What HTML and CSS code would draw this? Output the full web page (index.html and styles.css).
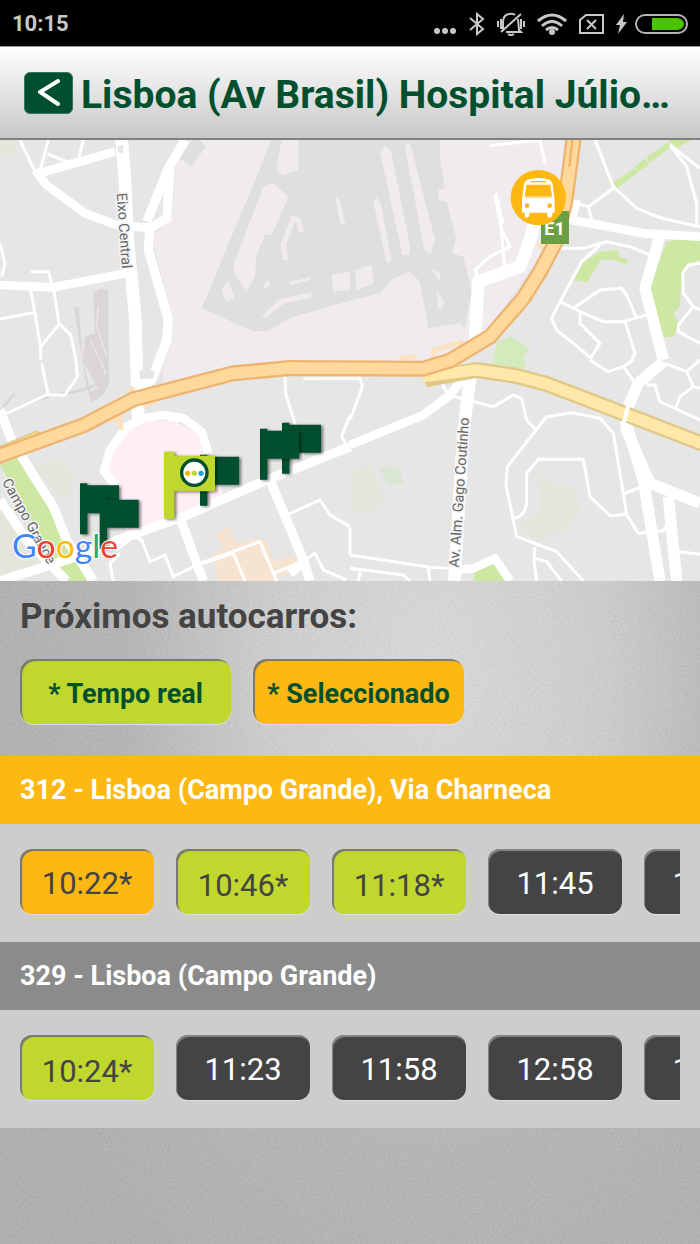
FILE: index.html
```html
<!DOCTYPE html>
<html lang="pt">
<head>
    <meta charset="UTF-8">
    <meta name="viewport" content="width=device-width, initial-scale=1.0">
    <title>Próximos autocarros</title>
    <link rel="stylesheet" href="styles.css">
</head>
<body>
    <div class="status-bar">
        <span class="clock">10:15</span>
        <div class="status-icons">
            <svg class="icon-dots" width="24" height="28" viewBox="0 0 24 28"><g fill="#c8c8c8"><circle cx="4" cy="21" r="3"/><circle cx="12" cy="21" r="3"/><circle cx="20" cy="21" r="3"/></g></svg>
            <svg class="icon-bluetooth" width="16" height="28" viewBox="0 0 16 28"><path d="M1 8l13 11-6 5V4l6 5L1 20" fill="none" stroke="#c8c8c8" stroke-width="2"/></svg>
            <svg class="icon-mute" width="28" height="28" viewBox="0 0 28 28"><g fill="none" stroke="#c8c8c8" stroke-width="2"><path d="M6 20V12Q6 5 12 4Q16 3 18 5M21 9L22 20L24 22H9"/><path d="M24 4L4 22"/><path d="M1 11v6M4 9v10M24 9v10M27 11v6"/><path d="M11 24q3 2 6 0"/></g></svg>
            <svg class="icon-wifi" width="30" height="28" viewBox="0 0 30 28"><g fill="none" stroke="#c8c8c8" stroke-width="3"><path d="M1 11Q15-1 29 11"/><path d="M5 16Q15 7 25 16"/><path d="M9 20Q15 15 21 20"/></g><circle cx="15" cy="22" r="3" fill="#c8c8c8"/></svg>
            <svg class="icon-sim" width="25" height="28" viewBox="0 0 25 28"><path d="M7 5H24V23H1V10Z" fill="none" stroke="#c8c8c8" stroke-width="2"/><path d="M8 10l9 9M17 10l-9 9" stroke="#c8c8c8" stroke-width="2"/></svg>
            <svg class="icon-bolt" width="11" height="28" viewBox="0 0 11 28"><path d="M8 4L0 15H4L2 24L11 12H7Z" fill="#c8c8c8"/></svg>
            <svg class="icon-battery" width="53" height="28" viewBox="0 0 53 28"><rect x="1" y="5" width="51" height="18" rx="9" fill="none" stroke="#b4b4b4" stroke-width="2"/><path d="M17 8H42Q49 9 49 14T42 20H17Z" fill="#4bc400"/></svg>
        </div>
    </div>

    <header class="header">
        <button class="back-button" type="button" aria-label="Voltar">
            <svg width="22" height="30" viewBox="0 0 22 30"><path d="M20 3L2 14L20 26" fill="none" stroke="#fff" stroke-width="4" stroke-linecap="round"/></svg>
        </button>
        <h1 class="title">Lisboa (Av Brasil) Hospital Júlio…</h1>
    </header>

    <main>
        <!-- Mapa -->
        <svg class="map" viewBox="0 0 2100 1323">
            <defs>
                <path id="flag" d="M0 0H22V6H117V90H22V153H0Z"/>
            </defs>
            <rect width="2100" height="1323" fill="#e6e6e6"/>

            <!-- aeroporto -->
            <path fill="#f0ebef" d="M570 0L530 60L515 230L460 290L470 350L520 550L490 660V740L700 690L870 670L1350 660L1470 560L1620 350L1690 200V0Z"/>
            <path fill="#dfdfdf" d="M575 0L540 55L575 78L618 20L600 0Z"/>
            <path fill="#dfdfdf" d="M815 0L605 505L760 574H800L880 530L1050 482L1140 460L1180 415L1230 395L1260 425L1285 565L1380 550L1395 565L1415 450L1390 350L1355 340L1368 295L1340 185L1315 180V150L1335 145L1320 55V0Z"/>
            <g fill="#f0ebef">
                <path d="M845 0L828 88L850 105L895 90V0Z"/>
                <path d="M820 128L865 172L815 285H795L770 345L765 410L740 457L702 400V370L790 140Z"/>
                <path d="M683 422L705 475L678 485L665 450ZM805 416L810 438L787 447ZM868 426L935 410L930 420L870 435ZM995 405L1050 395V450L1000 455ZM787 527L835 480L935 455V472L850 492L795 535ZM1005 165L1020 180L1037 257L1020 250Z"/>
                <path d="M1140 35L1155 18L1172 30L1230 320L1228 345H1207ZM1213 10H1230L1305 300L1290 345L1272 325ZM1120 185L1130 172L1142 190L1175 360L1160 370ZM1065 390L1115 375L1122 430L1070 450ZM1292 385L1320 400L1322 430ZM1310 450L1336 490L1315 512Z"/>
                <path d="M905 275L895 240L880 235L850 315L858 360" fill="none" stroke="#f0ebef" stroke-width="16"/>
            </g>

            <!-- zonas verdes e edifícios -->
            <g fill="#cde8a3">
                <path d="M0 975L50 950L140 1060L200 1200L260 1323H190L110 1170Z"/>
                <path d="M1840 130L1905 87L1910 97L1850 143ZM1907 80L1935 60L1943 75L1915 90ZM1943 52L2005 10L2010 20L1950 65ZM2010 0H2070L2030 22Z" stroke="#cde8a3" stroke-width="5"/>
                <path d="M1720 420L1745 370L1800 335L1855 330L1857 350L1885 360L1880 375L1840 358L1800 362L1762 427Z"/>
                <path d="M2000 305L2050 295H2100V360L2060 375L2042 450L2040 500L2020 520L2035 550L2020 590L1992 592L1950 445Z"/>
                <path d="M1422 1323V1295L1465 1275H1500L1535 1323Z"/>
            </g>
            <path fill="#d3eabd" d="M1475 685L1490 610L1530 588L1565 610L1590 630L1570 650L1580 685Z"/>
            <path fill="#dae6d1" d="M1138 980H1195L1210 1032H1160Z"/>
            <path fill="#e4e6dc" d="M1060 990L1110 975L1155 1080L1110 1120H1050ZM1615 1005L1670 1040L1720 1035L1740 1110L1710 1165L1610 1205L1550 1150L1620 1120ZM0 0H45V45H0ZM0 1060L110 1210L160 1260L0 1310ZM100 980L180 955L230 1010L200 1080L140 1030Z"/>
            <path fill="#feeff7" d="M330 1040L320 950L370 880L440 845L520 840L590 880L625 970L670 1060L540 1130L380 1180Z"/>
            <path fill="#f7e4d0" d="M645 1178L690 1160L705 1210L775 1195L800 1205L820 1265L895 1245L905 1270L850 1305L820 1323H655L640 1270L635 1245L670 1225Z"/>
            <path fill="#d9d5d9" d="M280 460L300 447L325 450V650L328 720Q320 770 275 785L265 760L295 745L250 665L255 590L285 580ZM222 502H235L250 665L275 770L260 745Z"/>
            <path d="M20 820Q110 770 190 760T290 730M10 800L45 760" fill="none" stroke="#d9d5d9" stroke-width="8"/>
            <path d="M295 500L290 560L320 650M270 600L300 660L318 700" fill="none" stroke="#e6e6e6" stroke-width="5"/>

            <!-- ruas secundárias -->
            <g fill="none" stroke="#fff" stroke-width="9" stroke-linejoin="round">
                <path d="M60 0L105 95M145 0L122 85M142 42L215 70M250 0L235 60M0 310L15 370L5 410M92 395H145L160 445L177 550L212 585L228 660L232 710L195 765H145L125 670M92 450L105 520L122 625V660M0 537L105 517M122 620L177 553M20 820L145 762"/>
                <path d="M350 1230L400 1190L425 1200L450 1265L495 1245L520 1310L600 1270L780 1205L830 1323M610 1270L700 1240L735 1323M820 1300L905 1265L945 1240L970 1290L1040 1320M340 1323L330 1270L360 1240"/>
                <path d="M855 710L857 760L885 850L910 950M1050 825L1025 890L1040 920M860 1125L960 1080L990 1125L1050 1160M910 716L1080 715L1087 740L1050 840"/>
                <path d="M1470 17L1620 0L1635 70M1487 160L1500 215L1510 250M1485 165L1505 270L1530 320L1470 350L1430 385M1495 180L1515 390M1425 385L1440 440"/>
                <path d="M1785 0L1840 140L1910 205L1985 235L2100 260M2010 15L2060 80L2090 190V260M2010 15L2100 85M1730 190L1765 200L1840 145M1765 200L1775 240M1665 325L1750 325L1820 305L1890 320L1950 345M1800 315L1745 365L1680 485L1655 535L1670 570L1775 655M1680 485L1740 515L1810 545H1870L1940 525M1720 505L1800 450L1865 445L1880 465L1910 535M1740 515V550L1800 610L1775 650M1875 545L1905 640L1895 660M2100 370L2065 375L2048 400L2050 460L2080 500L2100 510M2080 500L2035 555V575L2100 610"/>
                <path d="M1320 720L1345 765L1480 800L1540 765L1565 775L1580 840L1608 870L1640 830L1715 818L1800 835L1840 880L1870 1060L1880 1125L1915 1180L1990 1172L2010 1140M1608 870L1522 980L1518 1035L1550 1190L1670 1235L1750 1323M1540 1135Q1578 1130 1580 1085V1000L1615 958H1750L1770 1070L1830 1128L1880 1122M1875 1060L1925 1040M1605 1220L1602 1260L1610 1323M1605 1255L1640 1265L1685 1323"/>
                <path d="M1770 660L1825 695L1870 680L1900 660M1870 680L1910 735M1995 670L2060 695L2080 740L2100 745M2060 695L2100 660M2080 740L2040 770L2025 810M1940 735H1965L1980 785L2100 840M2010 1170L2040 1323M2035 1235L2100 1243M1050 1245L1290 1282L1350 1285M1050 1285L1210 1305L1230 1323M1285 1285L1290 1323M1080 1295L1075 1323M1050 1165V1245"/>
            </g>

            <!-- ruas principais -->
            <g fill="none" stroke="#fff" stroke-linejoin="round">
                <path stroke-width="26" d="M105 90L140 135L255 220L350 255L465 265M110 102L345 35M0 435L160 442L385 398M310 1000L330 930L380 860L430 835L490 825L550 835L605 875L625 940M310 990L355 1050"/>
                <path stroke-width="38" d="M365 0L375 120L383 300L405 520L415 840"/>
                <path stroke-width="28" d="M450 260L445 330L505 540L500 600L455 720L420 740L410 840"/>
                <path stroke-width="28" d="M555 0L505 85L440 245M510 80L500 235L450 265"/>
                <path stroke-width="28" d="M0 810L35 900L90 990L160 1100L200 1200L280 1323M0 1080L80 1200L200 1323M0 1323L230 1250L340 1205L550 1130L800 1020L1050 920M535 1120L610 1323M810 1020L910 1260L930 1323M905 1270L870 1300"/>
                <path stroke-width="38" d="M1605 240L1590 300L1560 380L1435 425L1425 600M1412 700L1390 880L1363 1323"/>
                <path stroke-width="26" d="M1050 915L1270 825L1350 765L1400 700M1730 180L1715 240L1930 280L2100 290M1360 1290L1420 1285L1485 1255L1530 1323"/>
                <path stroke-width="34" d="M1980 285L1935 445L1990 660M1880 810L1915 730L1990 665M1875 840L1930 1020L1980 1323M1875 860L1950 1030L2100 1090M2005 1070L2030 1323"/>
            </g>
            <path fill="#e6e6e6" d="M350 20L370 15L368 40L355 37ZM418 692L440 685L465 695L460 715L420 718ZM480 222L492 195L488 225Z"/>

            <!-- autoestradas -->
            <g fill="none" stroke-linejoin="round">
                <path d="M1300 655V630L1390 605M1200 655L1250 648M1615 310L1650 350M1728 10L1715 170M320 840L370 835M365 870L355 830L400 740M430 800L490 770" stroke="#fde2bd" stroke-width="14"/>
                <path d="M0 920L110 875L160 905L0 965" fill="#ffe7a6" stroke="#e1ca86" stroke-width="6"/>
                <path d="M1275 718L1430 690L1550 708L1640 732L1870 820L2110 912" stroke="#e0c887" stroke-width="48"/>
                <path d="M1270 710L1430 690L1550 708L1640 732L1870 820L2110 912" stroke="#ffe8a8" stroke-width="34"/>
                <path d="M-10 950L250 856L400 778L700 700L870 684L1270 686L1350 662L1470 590L1570 475L1620 395L1665 310L1695 190L1722-10" stroke="#eeb471" stroke-width="48"/>
                <path d="M-10 950L250 856L400 778L700 700L870 684L1270 686L1350 662L1470 590L1570 475L1620 395L1665 310L1695 190L1722-10" stroke="#ffd99b" stroke-width="34"/>
                <path d="M1717 0L1708 80" stroke="#eeb471" stroke-width="7"/>
            </g>
            <path d="M1885 795L1868 860" fill="none" stroke="#fff" stroke-width="12"/>

            <!-- nomes das ruas -->
            <g class="street-name">
                <text transform="translate(350 160) rotate(86)">Eixo Central</text>
                <text transform="translate(5 1025) rotate(61)">Campo Grande</text>
                <text transform="translate(1376 1283) rotate(-86)">Av. Alm. Gago Coutinho</text>
            </g>

            <!-- paragens -->
            <g class="stop">
                <use href="#flag" x="240" y="1030"/>
                <use href="#flag" x="299" y="1073"/>
                <use href="#flag" x="600" y="944"/>
                <use href="#flag" x="846" y="848"/>
                <use href="#flag" x="780" y="866"/>
            </g>
            <g class="stop-selected">
                <path d="M492 935H523V947H645V1054H523V1136H492Z"/>
                <circle cx="583" cy="998" r="38" fill="#fff" stroke="#00502f" stroke-width="10"/>
                <circle cx="563" cy="1000" r="8" fill="#fdb015"/>
                <circle cx="583" cy="1000" r="8" fill="#c0d72e"/>
                <circle cx="603" cy="1000" r="8" fill="#18a8e8"/>
            </g>

            <!-- autocarro -->
            <rect x="1623" y="213" width="84" height="99" fill="#6a9f43"/>
            <text class="road-shield" x="1633" y="284">E1</text>
            <circle cx="1615" cy="173" r="83" fill="#fdb813"/>
            <path fill="#fff" d="M1571 142Q1571 119 1590 117Q1615 111 1640 117Q1659 119 1659 142L1664 180V218H1657V226Q1656 233 1649 233T1642 226V218H1588V226Q1587 233 1580 233T1574 226V218H1566V180Z"/>
            <path fill="#fdb813" d="M1579 134H1651L1656 170H1574ZM1591 123H1639V127H1591Z"/>
            <path fill="#ffe08e" d="M1574 169H1656V174H1574Z"/>
            <circle cx="1581" cy="197" r="7" fill="#fdb813"/>
            <circle cx="1649" cy="197" r="7" fill="#fdb813"/>

            <text class="map-logo" x="36" y="1254"><tspan fill="#4285f4">G</tspan><tspan fill="#ea4335">o</tspan><tspan fill="#fbbc05">o</tspan><tspan fill="#4285f4">g</tspan><tspan fill="#34a853">l</tspan><tspan fill="#ea4335">e</tspan></text>
        </svg>

        <section class="next-buses">
            <h2 class="section-title">Próximos autocarros:</h2>
            <div class="legend">
                <span class="legend-item realtime">* Tempo real</span>
                <span class="legend-item selected">* Seleccionado</span>
            </div>
        </section>

        <section class="route">
            <h3 class="route-name active">312 - Lisboa (Campo Grande), Via Charneca</h3>
            <div class="times">
                <button class="time selected" type="button">10:22*</button>
                <button class="time realtime" type="button">10:46*</button>
                <button class="time realtime" type="button">11:18*</button>
                <button class="time" type="button">11:45</button>
                <button class="time" type="button">12:15</button>
            </div>
        </section>

        <section class="route">
            <h3 class="route-name">329 - Lisboa (Campo Grande)</h3>
            <div class="times">
                <button class="time realtime" type="button">10:24*</button>
                <button class="time" type="button">11:23</button>
                <button class="time" type="button">11:58</button>
                <button class="time" type="button">12:58</button>
                <button class="time" type="button">13:58</button>
            </div>
        </section>
    </main>

    <!-- textura do fundo -->
    <svg class="texture" aria-hidden="true">
        <filter id="grain">
            <feTurbulence type="fractalNoise" baseFrequency="0.5" numOctaves="2" seed="3"/>
            <feColorMatrix type="matrix" values="1 0 0 0 0  1 0 0 0 0  1 0 0 0 0  0 0 0 0 1"/>
        </filter>
        <rect width="100%" height="100%" filter="url(#grain)"/>
    </svg>
</body>
</html>
```
FILE: styles.css
```css
* {
    box-sizing: border-box;
}

body {
    margin: 0;
    min-height: 100vh;
    position: relative;
    font-family: Roboto, "Liberation Sans", sans-serif;
    color: #444;
    background: radial-gradient(ellipse at 62% 54%, #dcdcdc 0%, #cfcfcf 28%, #b5b5b5 50%, #aeaeae 80%);
}

/* Textura por trás do conteúdo */
.texture {
    position: absolute;
    top: 0;
    left: 0;
    width: 100%;
    height: 100%;
    z-index: -1;
    opacity: 0.12;
}

/* Barra de estado */
.status-bar {
    display: flex;
    align-items: center;
    justify-content: space-between;
    height: 46px;
    padding: 2px 12px 0;
    background: #000;
    color: #c8c8c8;
}

.clock {
    font-size: 22px;
    font-weight: 700;
    line-height: 46px;
}

.status-icons {
    display: flex;
    align-items: center;
    gap: 12px;
}

.icon-bolt {
    margin-right: -4px;
}

/* Cabeçalho */
.header {
    display: flex;
    align-items: center;
    gap: 8px;
    height: 94px;
    padding: 0 24px;
    border-top: 1px solid #999;
    border-bottom: 2px solid #808080;
    background: linear-gradient(#fff, #c8c8c8);
}

.back-button {
    display: flex;
    align-items: center;
    justify-content: center;
    flex: none;
    width: 49px;
    height: 42px;
    padding: 0;
    border: 1px solid #39745c;
    border-radius: 6px;
    background: #00502f;
}

.title {
    margin: 0;
    padding-top: 4px;
    flex: 1;
    font-size: 39px;
    line-height: 46px;
    font-weight: 700;
    color: #00502f;
    white-space: nowrap;
}

/* Mapa */
.map {
    display: block;
    width: 100%;
    height: auto;
}

.street-name {
    font-size: 43px;
    fill: #666;
    stroke: #f4f4f4;
    stroke-width: 9px;
    paint-order: stroke;
}

.stop {
    fill: #00502f;
}

.stop use,
.stop-selected {
    filter: drop-shadow(6px 3px 4px rgba(0, 0, 0, 0.5));
}

.stop-selected {
    fill: #c0d72e;
}

.road-shield {
    font-size: 54px;
    font-weight: 700;
    fill: #fff;
}

.map-logo {
    font-family: Lato, sans-serif;
    font-size: 101px;
    stroke: #fff;
    stroke-width: 6px;
    paint-order: stroke;
}

/* Próximos autocarros */
.next-buses {
    padding: 15px 20px 32px;
}

.section-title {
    margin: 0 0 21px;
    font-size: 35px;
    line-height: 42px;
    font-weight: 700;
}

.legend {
    display: flex;
    gap: 22px;
}

.legend-item {
    width: 211px;
    height: 65px;
    border-radius: 14px;
    font-size: 27px;
    line-height: 70px;
    font-weight: 700;
    text-align: center;
    color: #00502f;
}

.route-name {
    margin: 0;
    padding: 0 20px;
    background: #8b8b8b;
    color: #fff;
    font-size: 27px;
    line-height: 68px;
    font-weight: 700;
}

.route-name.active {
    background: #fdb813;
}

.times {
    display: flex;
    gap: 22px;
    padding: 25px 0 28px;
    overflow: hidden;
    border-left: 20px solid #cdcdcd;
    border-right: 20px solid #cdcdcd;
    background: #cdcdcd;
}

.time {
    flex: none;
    width: 134px;
    height: 65px;
    padding: 3px 0 0;
    border: none;
    border-radius: 12px;
    background: #444;
    color: #fff;
    font-family: inherit;
    font-size: 31px;
    box-shadow: inset 1px 2px 1px #888, 0 1px 1px #e0e0e0;
}

.selected,
.realtime {
    color: #444;
    box-shadow: inset 2px 2px 1px #777, 0 1px 1px #e0e0e0;
}

.legend-item.selected,
.legend-item.realtime {
    color: #00502f;
}

.selected {
    background: #fdb813;
}

.realtime {
    background: #c0d72e;
}

.time.realtime {
    padding-top: 7px;
}
```
